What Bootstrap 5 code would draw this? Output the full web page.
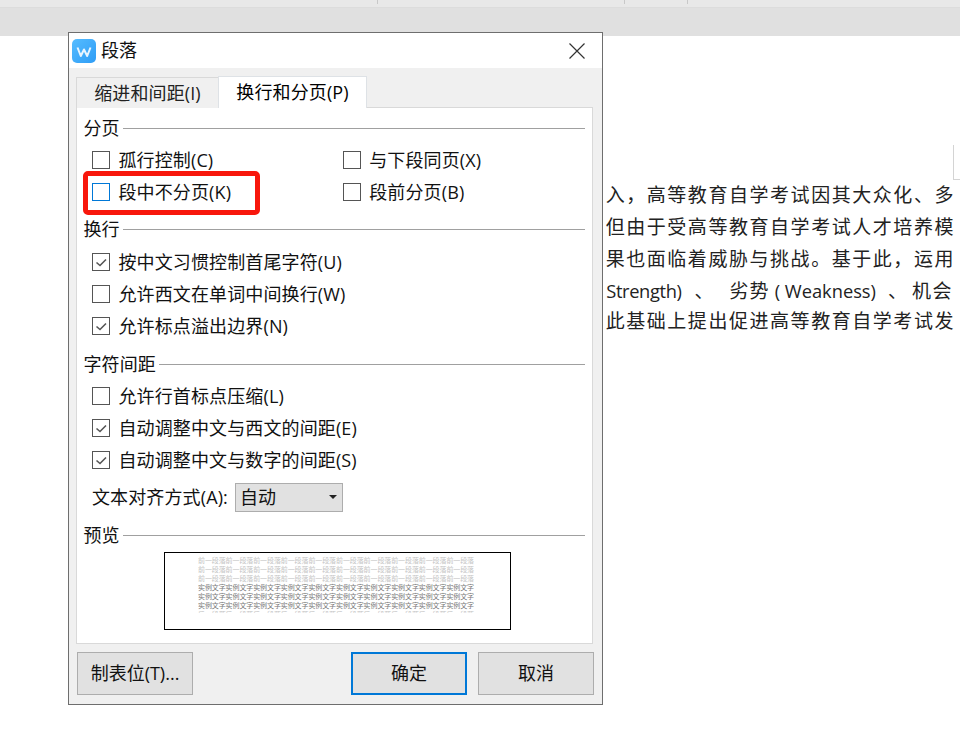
<!DOCTYPE html>
<html lang="zh">
<head>
<meta charset="utf-8">
<link href="https://cdn.jsdelivr.net/npm/bootstrap@5.3.0/dist/css/bootstrap.min.css" rel="stylesheet">
<style>
html,body{margin:0;height:739px;overflow:hidden;background:#fff;}
body{font-family:"Open Sans","Noto Sans CJK SC",sans-serif;font-size:18px;color:#111;position:relative;letter-spacing:.12px;}
.top-strip{height:8px;background:#e8e8e8;border-bottom:1px solid #dcdcdc;position:relative;}
.top-tick{position:absolute;top:0;width:1px;height:4px;background:#c8c8c8;}
.ribbon-shade{height:28px;background:#e0e0e0;}
.doc-lines{padding-top:143px;margin-left:603px;width:352px;overflow:hidden;font-size:19px;color:#222;line-height:32px;}
.doc-line{white-space:nowrap;display:flex;justify-content:flex-end;letter-spacing:1.55px;}
.doc-line.tight{letter-spacing:0;padding-right:2px;}
.doc-line.last-line{margin-top:-2px;}
.lat{font-size:18.3px;}
.lat-s{letter-spacing:-.35px;}
.cjk-a{letter-spacing:1px;}
.cjk-b{letter-spacing:1.5px;}
.sp-a{margin-left:13px;}.sp-b{margin-left:16px;}.sp-c{margin-left:5px;}.sp-d{margin-left:12px;}.sp-e{margin-left:5px;}
.corner-mark{position:absolute;left:953px;top:145px;width:7px;height:35px;border-left:1px solid #d4d4d4;border-bottom:1px solid #d4d4d4;}
.para-dialog{position:absolute;left:68px;top:32px;width:535px;height:673px;background:#f0f0f0;border:1px solid #6e6e6e;}
.dlg-title{height:35px;background:#fff;padding-left:3px;gap:5px;font-size:18px;}
.dlg-close{width:24px;height:24px;margin-right:13px;background:none;border:0;padding:3px;}
.dlg-close svg{display:block;}
.dlg-tabs{margin:8px 0 0 7px;border:0;height:32px;flex-wrap:nowrap;}
.dlg-tabs .nav-link{border-radius:0;font-size:18px;color:#222;padding:0;text-align:center;line-height:30px;background:#f0f0f0;}
.dlg-tabs .tab-off{width:142px;height:31px;margin-top:1px;border:1px solid #d9d9d9;border-bottom:0;border-right:0;}
.dlg-tabs .tab-on{width:149px;height:32px;background:#fff;border:1px solid #d9d9d9;border-bottom:0;position:relative;z-index:1;}
.dlg-panel{margin:-1px 9px 0 7px;height:537px;background:#fff;border:1px solid #d9d9d9;padding:4px 7px 0 6.5px;}
.sec-head{height:32px;gap:3px;}
.sec-head hr{flex:1;margin:0;border:0;border-top:1px solid #a0a0a0;opacity:1;}
.gap5{margin-top:5px;}.gap6{margin-top:6px;}.gap1{margin-top:1px;}
.opt-row{height:32px;}
.opt{width:251.5px;margin:0;padding:0 0 0 8.5px;gap:8.5px;min-height:0;height:32px;}
.opt .form-check-input{float:none;margin:0;width:18px;height:18px;border:1px solid #555;border-radius:0;box-shadow:none;background-color:#fff;flex:none;}
.opt .form-check-input:checked{background-color:#fff;border-color:#555;background-size:16px 16px;background-image:url("data:image/svg+xml,%3csvg xmlns='http://www.w3.org/2000/svg' viewBox='0 0 16 16'%3e%3cpath fill='none' stroke='%23555' stroke-width='1.6' d='M3.5 8.5L7 11.5L13 5.5'/%3e%3c/svg%3e");}
.opt .form-check-input.is-hot{border-color:#0078d7;}
.opt .form-check-label{line-height:32px;}
.align-row{height:32px;padding-left:8.5px;gap:7px;}
.dlg-select{width:108px;height:29px;background:#e1e1e1;border:1px solid #adadad;padding:0 5px 0 4px;font-size:18px;}
.dlg-caret{width:0;height:0;border-left:4px solid transparent;border-right:4px solid transparent;border-top:4px solid #222;}
.preview-box{margin:1px 0 0 80.5px;width:347px;height:78px;border:1px solid #000;background:#fff;padding:3px 0 0 33px;overflow:hidden;}
.pv-clip{width:278px;height:57px;overflow:hidden;font-size:7px;line-height:9px;white-space:nowrap;font-family:"Noto Sans CJK SC",sans-serif;letter-spacing:-.1px;}
.pv-old{color:#c4c4c4;}.pv-new{color:#777;}
.dlg-foot{padding:8px 8px 0 8px;}
.dlg-btn{height:43px;background:#e1e1e1;border:1px solid #adadad;border-radius:0;font-size:18px;color:#111;padding:0;}
.dlg-btn:hover{background:#e1e1e1;}
.btn-tab{width:116px;}
.btn-ok{width:116px;margin-left:158px;border:2px solid #0078d7;}
.btn-cancel{width:116px;margin-left:11px;}
.red-mark{position:absolute;left:14px;top:138px;width:177px;height:44px;border:5px solid #f8170c;border-radius:5px;pointer-events:none;}
</style>
</head>
<body>
<div class="top-strip"><span class="top-tick" style="left:377px"></span><span class="top-tick" style="left:624px"></span><span class="top-tick" style="left:687px"></span></div>
<div class="ribbon-shade"></div>
<div class="doc-lines">
  <div class="doc-line">入，高等教育自学考试因其大众化、多</div>
  <div class="doc-line">但由于受高等教育自学考试人才培养模</div>
  <div class="doc-line">果也面临着威胁与挑战。基于此，运用</div>
  <div class="doc-line tight"><span class="lat lat-s">Strength)</span><span class="sp-a">、</span><span class="sp-b cjk-a">劣势</span><span class="lat sp-c">( Weakness)</span><span class="sp-d">、</span><span class="sp-e cjk-b">机会</span></div>
  <div class="doc-line last-line">此基础上提出促进高等教育自学考试发</div>
</div>
<div class="corner-mark"></div>

<div class="para-dialog">
  <div class="dlg-title d-flex align-items-center">
    <svg width="24" height="24" viewBox="0 0 24 24" aria-hidden="true"><defs><linearGradient id="wg" x1="0" y1="0" x2="1" y2="1"><stop offset="0" stop-color="#55bcff"/><stop offset="1" stop-color="#2f9df6"/></linearGradient></defs><rect width="24" height="24" rx="5" fill="url(#wg)"/><path d="M5.5 8.5L8.8 17L12 10.5L15.2 17L18.5 8.5" fill="none" stroke="#e8f5ff" stroke-width="2" stroke-linejoin="round"/></svg>
    <span class="flex-grow-1">段落</span>
    <button type="button" class="dlg-close" aria-label="关闭"><svg width="18" height="18" viewBox="0 0 18 18"><path d="M1.5 1.5l15 15M16.5 1.5l-15 15" stroke="#333" stroke-width="1.2" fill="none"/></svg></button>
  </div>
  <ul class="nav nav-tabs dlg-tabs">
    <li class="nav-item"><a class="nav-link tab-off" href="#">缩进和间距(I)</a></li>
    <li class="nav-item"><a class="nav-link active tab-on" href="#">换行和分页(P)</a></li>
  </ul>
  <div class="dlg-panel">
    <div class="sec-head d-flex align-items-center"><span>分页</span><hr></div>
    <div class="opt-row d-flex">
      <div class="form-check opt d-flex align-items-center"><input class="form-check-input" type="checkbox" id="c1"><label class="form-check-label" for="c1">孤行控制(C)</label></div>
      <div class="form-check opt d-flex align-items-center"><input class="form-check-input" type="checkbox" id="c2"><label class="form-check-label" for="c2">与下段同页(X)</label></div>
    </div>
    <div class="opt-row d-flex">
      <div class="form-check opt d-flex align-items-center"><input class="form-check-input is-hot" type="checkbox" id="c3"><label class="form-check-label" for="c3">段中不分页(K)</label></div>
      <div class="form-check opt d-flex align-items-center"><input class="form-check-input" type="checkbox" id="c4"><label class="form-check-label" for="c4">段前分页(B)</label></div>
    </div>
    <div class="sec-head d-flex align-items-center gap5"><span>换行</span><hr></div>
    <div class="gap1">
      <div class="form-check opt d-flex align-items-center w-100"><input class="form-check-input" type="checkbox" id="c5" checked><label class="form-check-label" for="c5">按中文习惯控制首尾字符(U)</label></div>
      <div class="form-check opt d-flex align-items-center w-100"><input class="form-check-input" type="checkbox" id="c6"><label class="form-check-label" for="c6">允许西文在单词中间换行(W)</label></div>
      <div class="form-check opt d-flex align-items-center w-100"><input class="form-check-input" type="checkbox" id="c7" checked><label class="form-check-label" for="c7">允许标点溢出边界(N)</label></div>
    </div>
    <div class="sec-head d-flex align-items-center gap6"><span>字符间距</span><hr></div>
    <div>
      <div class="form-check opt d-flex align-items-center w-100"><input class="form-check-input" type="checkbox" id="c8"><label class="form-check-label" for="c8">允许行首标点压缩(L)</label></div>
      <div class="form-check opt d-flex align-items-center w-100"><input class="form-check-input" type="checkbox" id="c9" checked><label class="form-check-label" for="c9">自动调整中文与西文的间距(E)</label></div>
      <div class="form-check opt d-flex align-items-center w-100"><input class="form-check-input" type="checkbox" id="c10" checked><label class="form-check-label" for="c10">自动调整中文与数字的间距(S)</label></div>
    </div>
    <div class="align-row d-flex align-items-center gap5">
      <span>文本对齐方式(A):</span>
      <div class="dlg-select d-flex align-items-center justify-content-between"><span>自动</span><span class="dlg-caret"></span></div>
    </div>
    <div class="sec-head d-flex align-items-center gap6"><span>预览</span><hr></div>
    <div class="preview-box">
      <div class="pv-clip">
        <div class="pv-old">前一段落前一段落前一段落前一段落前一段落前一段落前一段落前一段落前一段落前一段落</div>
        <div class="pv-old">前一段落前一段落前一段落前一段落前一段落前一段落前一段落前一段落前一段落前一段落</div>
        <div class="pv-old">前一段落前一段落前一段落前一段落前一段落前一段落前一段落前一段落前一段落前一段落</div>
        <div class="pv-new">实例文字实例文字实例文字实例文字实例文字实例文字实例文字实例文字实例文字实例文字</div>
        <div class="pv-new">实例文字实例文字实例文字实例文字实例文字实例文字实例文字实例文字实例文字实例文字</div>
        <div class="pv-new">实例文字实例文字实例文字实例文字实例文字实例文字实例文字实例文字实例文字实例文字</div>
        <div class="pv-old">后一段落后一段落后一段落后一段落后一段落后一段落后一段落后一段落后一段落后一段落</div>
      </div>
    </div>
  </div>
  <div class="dlg-foot d-flex">
    <button type="button" class="btn dlg-btn btn-tab">制表位(T)...</button>
    <button type="button" class="btn dlg-btn btn-ok">确定</button>
    <button type="button" class="btn dlg-btn btn-cancel">取消</button>
  </div>
  <div class="red-mark"></div>
</div>
<script src="https://cdn.jsdelivr.net/npm/bootstrap@5.3.0/dist/js/bootstrap.bundle.min.js"></script>
</body>
</html>
